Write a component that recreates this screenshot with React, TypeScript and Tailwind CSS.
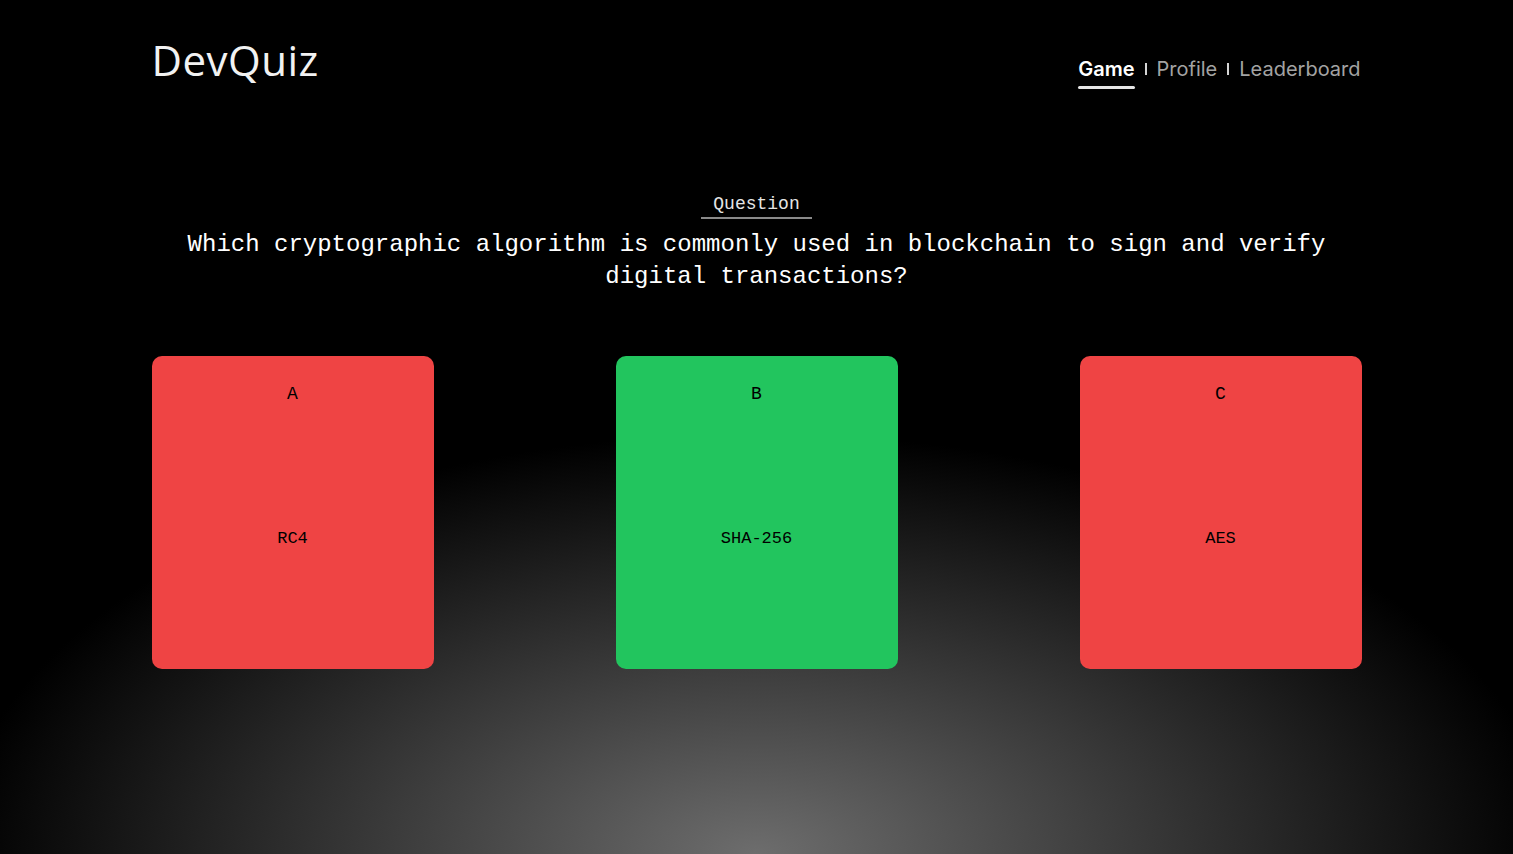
const options = [
  { letter: "A", text: "RC4", correct: false },
  { letter: "B", text: "SHA-256", correct: true },
  { letter: "C", text: "AES", correct: false },
];

const mono = "font-['Liberation_Mono','DejaVu_Sans_Mono',monospace]";

const App = () => {
  return (
    <div className="h-screen w-full overflow-hidden bg-black bg-[radial-gradient(ellipse_800px_420px_at_50%_100%,#6d6d6d_0%,#000_100%)]">
      <div className="w-[1210px] mx-auto">
        <header className="flex justify-between items-start pt-[32px]">
          <h1 className="text-[42px] leading-[56px] text-[#f2f2f2] font-['Open_Sans',sans-serif] font-normal tracking-[0.5px]">
            DevQuiz
          </h1>
          <nav className="flex items-center mt-[23px] text-[20px] leading-[28px] font-['Inter',sans-serif]">
            <span className="relative font-semibold text-white">
              Game
              <span className="absolute left-0 right-0 -bottom-[6px] h-[3px] rounded-full bg-[#e5e5e5]" />
            </span>
            <span className="mx-[10px] w-[2px] h-[12px] bg-[#d4d4d4]" />
            <span className="text-[#a3a3a3]">Profile</span>
            <span className="mx-[10px] w-[2px] h-[12px] bg-[#d4d4d4]" />
            <span className="text-[#a3a3a3] mr-[1px]">Leaderboard</span>
          </nav>
        </header>

        <section className={`flex flex-col items-center mt-[103px] ${mono}`}>
          <div className="px-3 border-b-2 border-[#8a8a8a] text-[18px] leading-[26px] text-[#e5e5e5]">
            Question
          </div>
          <p className="mt-[10px] text-center text-[24px] leading-[32px] text-white w-[1160px]">
            Which cryptographic algorithm is commonly used in blockchain to sign and verify digital transactions?
          </p>
        </section>

        <div className={`flex justify-between mt-[63px] ${mono}`}>
          {options.map((opt) => (
            <div
              key={opt.letter}
              className={`w-[282px] h-[313px] rounded-[10px] flex flex-col items-center pt-6 text-black ${
                opt.correct ? "bg-[#22c55e]" : "bg-[#ef4444]"
              }`}
            >
              <div className="text-[18px] leading-[28px]">{opt.letter}</div>
              <div className="flex-1 flex items-center text-[17px]">{opt.text}</div>
            </div>
          ))}
        </div>
      </div>
    </div>
  );
};

export default App;
